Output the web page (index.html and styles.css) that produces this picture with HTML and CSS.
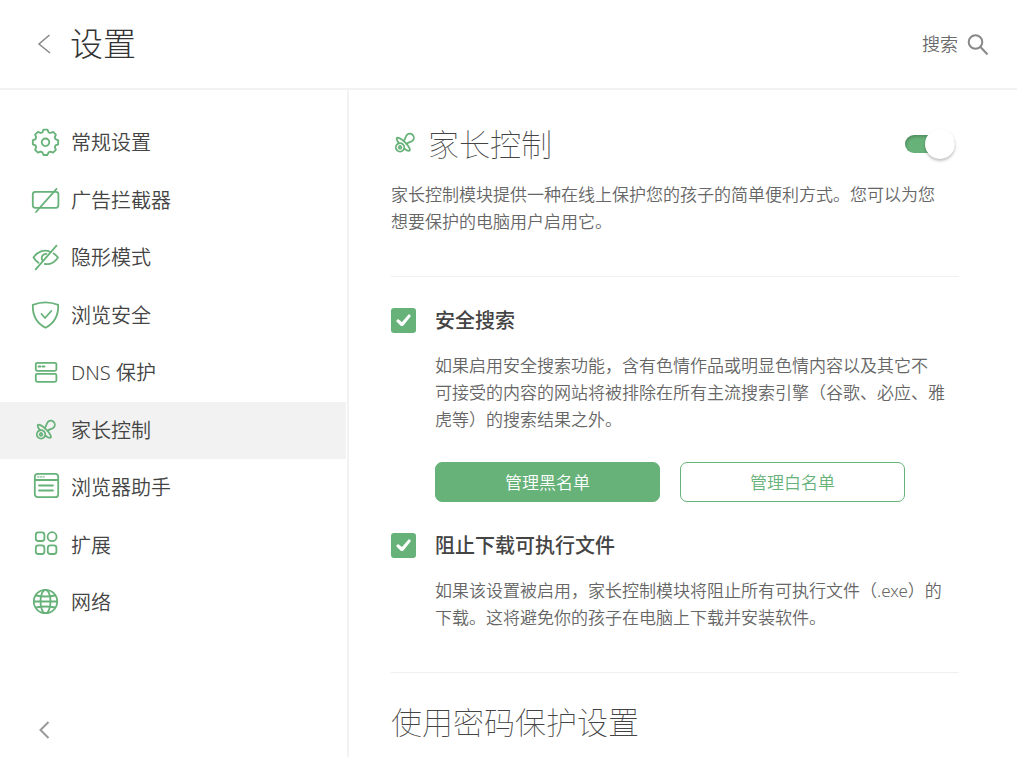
FILE: index.html
```html
<!DOCTYPE html>
<html lang="zh-CN">
<head>
  <meta charset="utf-8">
  <title>设置</title>
  <link rel="stylesheet" href="styles.css">
</head>
<body>
  <header class="header">
    <button class="icon-btn" type="button" aria-label="返回">
      <svg width="14" height="20" viewBox="0 0 14 20"><path d="M12.5 1L2 10l11 9"/></svg>
    </button>
    <h1>设置</h1>
    <button class="search" type="button">
      搜索
      <svg width="22" height="22" viewBox="0 0 22 22"><circle cx="8.5" cy="9" r="6.8"/><path d="M13.5 14l7 7.5"/></svg>
    </button>
  </header>

  <div class="layout">
    <aside class="sidebar">
      <nav>
        <ul class="menu">
          <li><a href="#general">
            <svg class="icon" viewBox="0 0 28 28">
              <g transform="translate(13.5 13.3)">
                <path d="M-3.1-10L-2-12.7H2L3.1-10L4.9-9.3L7.6-10.4L10.4-7.6L9.3-4.9L10-3.1L12.7-2V2L10 3.1L9.3 4.9L10.4 7.6L7.6 10.4L4.9 9.3L3.1 10L2 12.7H-2L-3.1 10L-4.9 9.3L-7.6 10.4L-10.4 7.6L-9.3 4.9L-10 3.1L-12.7 2V-2L-10-3.1L-9.3-4.9L-10.4-7.6L-7.6-10.4L-4.9-9.3Z"/>
                <circle r="3.8"/>
              </g>
            </svg>
            常规设置</a></li>
          <li><a href="#adblocker">
            <svg class="icon" viewBox="0 0 28 28">
              <rect x="0.8" y="4.8" width="25.6" height="16" rx="2.5"/>
              <path d="M4 25L24.5 1.8"/>
            </svg>
            广告拦截器</a></li>
          <li><a href="#stealth">
            <svg class="icon" viewBox="0 0 28 28">
              <path d="M3.7 25.3L24.5 1.7"/>
              <path d="M6.5 18.8C4.5 17.5 2.8 15.6 1.5 13.5C5.5 7.5 12 5 18.5 8"/>
              <path d="M21.5 9.5C23.5 10.8 25 12.2 26 13.5C22.8 18.2 17.8 20.8 12.8 20"/>
              <path d="M10.5 16.5C8.5 13.2 10.8 9.5 14.5 9.8"/>
            </svg>
            隐形模式</a></li>
          <li><a href="#security">
            <svg class="icon" viewBox="0 0 28 28">
              <path d="M0.8 2.8C8.5 -0.2 18.5 -0.2 26.2 2.8C26.6 14.5 22 21.5 13.5 25.8C5 21.5 0.4 14.5 0.8 2.8Z"/>
              <path d="M9.5 12L13 16L19.3 9"/>
            </svg>
            浏览安全</a></li>
          <li><a href="#dns">
            <svg class="icon" viewBox="0 0 28 28">
              <rect x="3.8" y="3.8" width="20.6" height="8" rx="1.5"/>
              <rect x="3.8" y="14.8" width="20.6" height="8" rx="1.5"/>
              <path d="M6.5 7.5h2M10.5 7.5h2"/>
            </svg>
            DNS 保护</a></li>
          <li class="active"><a href="#parental">
            <svg class="icon" viewBox="0 0 28 28">
              <g transform="translate(12.3 14.2) rotate(45)">
                <path d="M-2-2.6C-2-5.5-4-6.5-4-9.2A4 4 0 0 1 4-9.2C4-6.5 2-5.5 2-2.6"/>
                <path d="M-3.6 2.4A9 2.6 0 1 1 3.6 2.4"/>
                <circle cy="4.6" r="4.2"/>
                <circle cy="4.6" r="1.3"/>
              </g>
            </svg>
            家长控制</a></li>
          <li><a href="#assistant">
            <svg class="icon" viewBox="0 0 28 28">
              <rect x="2.8" y="-0.2" width="23.4" height="23.4" rx="3"/>
              <path d="M3 6h23M7 11.5h14M7 16.5h14"/>
              <path class="dots" d="M5.5 2.9h1.5M8.2 2.9h1.5M10.9 2.9h1.5"/>
            </svg>
            浏览器助手</a></li>
          <li><a href="#extensions">
            <svg class="icon" viewBox="0 0 28 28">
              <rect x="3.8" y="0.4" width="8.6" height="8.6" rx="2.5"/>
              <circle cx="20.1" cy="4.7" r="4.5"/>
              <rect x="3.8" y="13.4" width="8.6" height="8.6" rx="2.5"/>
              <rect x="15.8" y="13.4" width="8.6" height="8.6" rx="2.5"/>
            </svg>
            扩展</a></li>
          <li><a href="#network">
            <svg class="icon" viewBox="0 0 28 28">
              <circle cx="13.5" cy="12.5" r="11.7"/>
              <ellipse cx="13.5" cy="12.5" rx="5" ry="11.7"/>
              <path d="M2 12.5H25M3.8 6.5Q13.5 8.5 23.2 6.5M3.8 18.5Q13.5 16.5 23.2 18.5"/>
            </svg>
            网络</a></li>
        </ul>
      </nav>
      <button class="icon-btn collapse" type="button" aria-label="收起">
        <svg width="14" height="20" viewBox="0 0 14 20"><path d="M11.5 2L3.5 10l8 8"/></svg>
      </button>
    </aside>

    <main class="content">
      <section class="section">
        <div class="section-head">
          <svg class="icon" viewBox="0 0 28 28">
            <g transform="translate(12.3 14.2) rotate(45)">
              <path d="M-2-2.6C-2-5.5-4-6.5-4-9.2A4 4 0 0 1 4-9.2C4-6.5 2-5.5 2-2.6"/>
              <path d="M-3.6 2.4A9 2.6 0 1 1 3.6 2.4"/>
              <circle cy="4.6" r="4.2"/>
              <circle cy="4.6" r="1.3"/>
            </g>
          </svg>
          <h2 id="parental">家长控制</h2>
          <input class="toggle" type="checkbox" aria-labelledby="parental" checked>
        </div>
        <p>家长控制模块提供一种在线上保护您的孩子的简单便利方式。您可以为您<br>想要保护的电脑用户启用它。</p>
      </section>

      <section class="section">
        <div class="option">
          <input class="check" type="checkbox" id="safe-search" checked>
          <label for="safe-search">安全搜索</label>
          <p>如果启用安全搜索功能，含有色情作品或明显色情内容以及其它不<br>可接受的内容的网站将被排除在所有主流搜索引擎（谷歌、必应、雅<br>虎等）的搜索结果之外。</p>
          <div class="buttons">
            <button class="btn btn-filled" type="button">管理黑名单</button>
            <button class="btn" type="button">管理白名单</button>
          </div>
        </div>
        <div class="option">
          <input class="check" type="checkbox" id="block-exe" checked>
          <label for="block-exe">阻止下载可执行文件</label>
          <p>如果该设置被启用，家长控制模块将阻止所有可执行文件（.exe）的<br>下载。这将避免你的孩子在电脑上下载并安装软件。</p>
        </div>
      </section>

      <section class="section">
        <h2>使用密码保护设置</h2>
      </section>
    </main>
  </div>
</body>
</html>
```
FILE: styles.css
```css
* { box-sizing: border-box; }

body {
  margin: 0;
  min-height: 100vh;
  display: flex;
  flex-direction: column;
  background: #fff;
  color: #444;
  font-family: "Noto Sans", "Noto Sans CJK SC", sans-serif;
  font-weight: 350;
}

h1, h2, p, ul { margin: 0; padding: 0; }

button {
  padding: 0;
  border: none;
  background: none;
  font-family: inherit;
  font-weight: inherit;
  cursor: pointer;
}

svg {
  display: block;
  flex: none;
  overflow: visible;
  fill: none;
  stroke: #888;
  stroke-width: 1.5;
}

/* header */
.header {
  display: flex;
  align-items: center;
  height: 90px;
  padding: 0 28px 0 36px;
  border-bottom: 2px solid #f2f2f2;
}
.header h1 {
  margin-left: 18px;
  font-size: 33px;
  font-weight: 300;
  line-height: 40px;
  color: #333;
}
.icon-btn { padding: 0 1px; }
.search {
  display: flex;
  align-items: center;
  gap: 9px;
  margin-left: auto;
  font-size: 18px;
  line-height: 24px;
  color: #6b6b6b;
}
.search svg { stroke-width: 2; }

.layout { display: flex; flex: 1; }

/* sidebar */
.sidebar {
  display: flex;
  flex: none;
  flex-direction: column;
  justify-content: space-between;
  width: 349px;
  padding: 24px 1px 17px 0;
  border-right: 2px solid #f2f2f2;
}
.menu { list-style: none; }
.menu a {
  display: flex;
  align-items: center;
  gap: 11px;
  height: 57px;
  padding-left: 32px;
  color: #444;
  font-size: 20px;
  line-height: 28px;
  text-decoration: none;
}
.menu li:nth-child(odd) a { height: 58px; }
.menu .active { background: #f2f2f2; }
.icon {
  width: 28px;
  height: 28px;
  stroke: #67b279;
  stroke-width: 1.8;
  stroke-linecap: round;
  stroke-linejoin: round;
}
.icon .dots { stroke-width: 1; }
.collapse { align-self: flex-start; margin-left: 36px; }
.collapse svg { stroke: #999; stroke-width: 2; }

/* content */
.content {
  flex: 1;
  min-width: 0;
  padding: 34px 58px 0 42px;
}
.section { border-bottom: 1px solid #f0f0f0; padding-bottom: 41px; }
.section + .section { padding-top: 29px; }
.section:last-child { border-bottom: none; padding-bottom: 0; }
.section-head { display: flex; align-items: center; margin-bottom: 17px; }
.section-head h2 { margin-left: 9px; }
h2 {
  font-size: 31px;
  font-weight: 100;
  line-height: 40px;
}
p {
  color: #666;
  font-size: 17px;
  line-height: 27px;
}

.toggle {
  position: relative;
  appearance: none;
  width: 50px;
  height: 30px;
  margin: 0 4px 0 auto;
  cursor: pointer;
}
.toggle::before {
  content: "";
  display: block;
  height: 18px;
  margin-top: 6px;
  border-radius: 9px;
  background: #67b279;
  box-shadow: inset 1px 2px 3px rgba(0,0,0,0.2);
}
.toggle::after {
  content: "";
  position: absolute;
  top: 0;
  right: 0;
  width: 30px;
  height: 30px;
  border-radius: 50%;
  background: #fff;
  box-shadow: 0 2px 3px rgba(0,0,0,0.25);
}

.option {
  display: grid;
  grid-template-columns: 25px 1fr;
  column-gap: 19px;
  align-items: center;
}
.option + .option { margin-top: 29px; }
.option label {
  font-size: 20px;
  font-weight: 500;
  line-height: 29px;
}
.option p { grid-column: 2; margin-top: 17px; white-space: nowrap; }

.check {
  appearance: none;
  width: 25px;
  height: 25px;
  margin: 0;
  border-radius: 3px;
  background: #67b279;
  cursor: pointer;
}
.check::before {
  content: "";
  display: block;
  width: 25px;
  height: 25px;
  background: #fff;
  clip-path: polygon(5px 13px, 7px 11px, 11px 14px, 18px 6px, 20px 8px, 12px 18px, 10px 18px);
}

.buttons {
  grid-column: 2;
  display: flex;
  gap: 20px;
  margin-top: 29px;
}
.btn {
  width: 225px;
  height: 40px;
  border: 1px solid #67b279;
  border-radius: 7px;
  color: #67b279;
  font-size: 17px;
  line-height: 27px;
}
.btn-filled { background: #67b279; color: #fff; }
```
